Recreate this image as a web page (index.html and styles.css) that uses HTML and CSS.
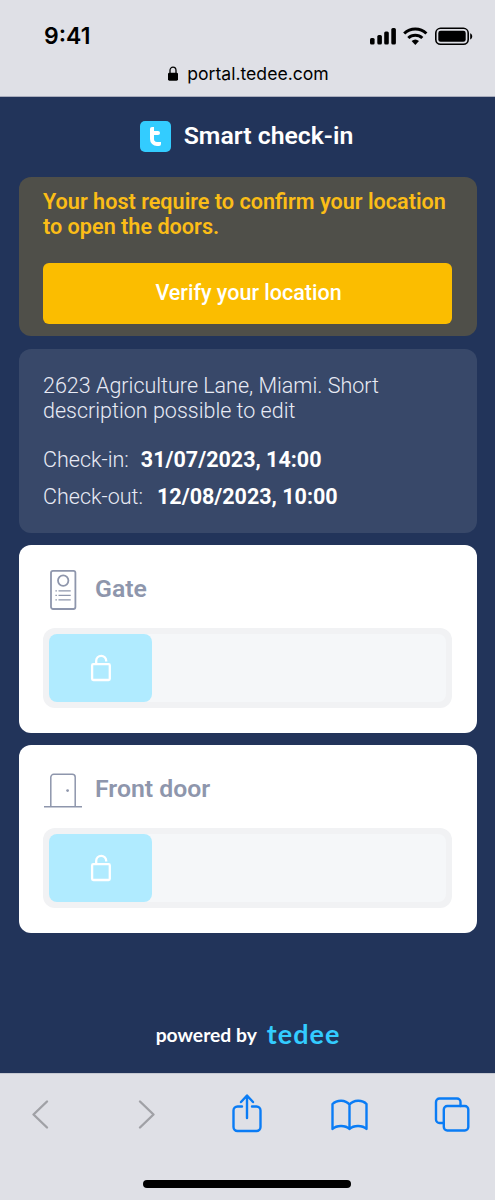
FILE: index.html
```
<!DOCTYPE html>
<html lang="en">
<head>
<meta charset="utf-8">
<title>Smart check-in</title>
<link rel="stylesheet" href="styles.css">
</head>
<body>

<!-- browser top -->
<div class="top">
    <div class="status">
        <span class="time">9:41</span>
        <svg class="status-icons" width="106" height="20" viewBox="0 0 106 20">
            <rect x="1" y="12" width="4.6" height="6.4" rx="1.5"/>
            <rect x="8.3" y="9" width="4.6" height="9.4" rx="1.5"/>
            <rect x="15.2" y="5.5" width="4.6" height="12.9" rx="1.5"/>
            <rect x="22.3" y="2" width="4.6" height="16.4" rx="1.5"/>
            <g fill="none" stroke="#000" stroke-width="3">
                <path d="M35.2 7.5a16 16 0 0 1 22.2 0"/>
                <path d="M39.3 12a10 10 0 0 1 14 0"/>
            </g>
            <path d="M42.6 15.1a5.6 5.6 0 0 1 7.4 0l-3.7 3.8z"/>
            <rect x="66.8" y="2.3" width="32.4" height="16" rx="4.8" fill="none" stroke="#000" stroke-width="1.6"/>
            <rect x="69.3" y="4.8" width="27.4" height="11" rx="2.3"/>
            <path d="M101.2 7.2c2.7 1 2.7 5.2 0 6.2z"/>
        </svg>
    </div>
    <div class="address">
        <svg width="12" height="16" viewBox="0 0 12 16">
            <rect x="1" y="6.7" width="10" height="8" rx="1.4"/>
            <path d="M3 7V4.4a3 3.3 0 0 1 6 0V7" fill="none" stroke="#000" stroke-width="1.3"/>
        </svg>
        <span class="url">portal.tedee.com</span>
    </div>
</div>

<!-- page -->
<div class="main">
    <div class="header">
        <div class="logo"><div class="stem"></div><div class="bar"></div></div>
        <h1>Smart check-in</h1>
    </div>

    <div class="card warning">
        <p>Your host require to confirm your location<br>to open the doors.</p>
        <button class="verify">Verify your location</button>
    </div>

    <div class="card info">
        <p class="address-text">2623 Agriculture Lane, Miami. Short<br>description possible to edit</p>
        <p class="date date-in"><span>Check-in:</span><b>31/07/2023, 14:00</b></p>
        <p class="date date-out"><span>Check-out:</span><b>12/08/2023, 10:00</b></p>
    </div>

    <div class="card lock">
        <div class="lock-name">
            <svg width="40" height="44" viewBox="0 0 40 44" fill="none" stroke="#8e96ac" stroke-width="1.8">
                <rect x="8" y="3.8" width="24.4" height="38.2" rx="2"/>
                <circle cx="20.2" cy="13.6" r="5.2"/>
                <path d="M15.5 23.8h12.2M15.5 28.3h12.2M15.5 32.9h12.2" stroke-width="1.3"/>
                <path d="M12.4 23.8h1.5M12.4 28.3h1.5M12.4 32.9h1.5" stroke-width="1.3"/>
            </svg>
            <h2>Gate</h2>
        </div>
        <div class="slider">
            <div class="handle">
                <svg width="24" height="30" viewBox="0 0 24 30" fill="none" stroke="#fff" stroke-width="2.3">
                    <rect x="3.1" y="11.2" width="17.7" height="15.8" rx="1.2"/>
                    <path d="M7.2 11V7.8a5 5 0 0 1 10 0v.6"/>
                </svg>
            </div>
        </div>
    </div>

    <div class="card lock">
        <div class="lock-name">
            <svg width="40" height="44" viewBox="0 0 40 44" fill="none" stroke="#8e96ac" stroke-width="1.5">
                <path d="M7.8 39.7V10.3a3 3 0 0 1 3-3h18.4a3 3 0 0 1 3 3V39.7M1 39.7h38"/>
                <circle cx="24.6" cy="23.6" r="1.4" fill="#8e96ac" stroke="none"/>
            </svg>
            <h2>Front door</h2>
        </div>
        <div class="slider">
            <div class="handle">
                <svg width="24" height="30" viewBox="0 0 24 30" fill="none" stroke="#fff" stroke-width="2.3">
                    <rect x="3.1" y="11.2" width="17.7" height="15.8" rx="1.2"/>
                    <path d="M7.2 11V7.8a5 5 0 0 1 10 0v.6"/>
                </svg>
            </div>
        </div>
    </div>

    <div class="footer">
        <span class="powered">powered by</span>
        <span class="brand">tedee</span>
    </div>
</div>

<!-- browser toolbar -->
<div class="toolbar">
    <div class="buttons">
        <svg width="40" height="44" viewBox="0 0 40 44" stroke="#a0a1a6"><path d="M27 9.5L13.5 22.5L27 35.5"/></svg>
        <svg width="40" height="44" viewBox="0 0 40 44" stroke="#a0a1a6"><path d="M17 9.5L30.5 22.5L17 35.5"/></svg>
        <svg width="40" height="44" viewBox="0 0 40 44"><path d="M16 14.500h-4.500a4 4 0 0 0-4 4v16.500a4 4 0 0 0 4 4h19a4 4 0 0 0 4-4V18.500a4 4 0 0 0-4-4H26M21 26V4M15 10L21 3.500l6 6.500"/></svg>
        <svg width="40" height="44" viewBox="0 0 40 44"><path d="M20.500 12.500C16.500 7.500 8 7.500 3.500 12v25c4-4 13-4 17 0c4-4 13-4 17 0V12c-4-4.500-13-4.500-17 .5zM20.500 12.500V37"/></svg>
        <svg width="40" height="44" viewBox="0 0 40 44"><rect x="11.8" y="14" width="24.5" height="24.5" rx="3.5"/><path d="M11.500 31H7.500a3.500 3.500 0 0 1-3.500-3.500V10A3.500 3.500 0 0 1 7.500 6.500H25a3.500 3.500 0 0 1 3.500 3.500v4"/></svg>
    </div>
    <div class="home"></div>
</div>

</body>
</html>
```
FILE: styles.css
```
*{box-sizing:border-box;}
body,h1,h2,p{margin:0; padding:0;}
body{width:495px; height:1200px; overflow:hidden; background:#dfe0e6; font-family:Roboto,"Liberation Sans",sans-serif;}
svg{display:block; flex:none;}

/* browser top */
.top{height:97px; border-bottom:1px solid #a9adbd; color:#000;}
.status{height:62px; padding:9px 20px 0 44px; display:flex; justify-content:space-between; align-items:center;}
.time{font:600 23px/28px Inter,sans-serif;}
.address{display:flex; justify-content:center; align-items:center; gap:8px; height:24px; padding-left:1px;}
.url{font:400 17.6px/24px Inter,sans-serif;}

/* page */
.main{height:976px; padding:24px 18px 0 19px; background:#22345a; display:flex; flex-direction:column;}
.header{height:31px; margin-bottom:25px; padding-right:3px; display:flex; justify-content:center; align-items:center; gap:13px;}
.header h1{color:#fff; font-size:24.8px; font-weight:600; line-height:30px; padding-bottom:2px;}
.logo{position:relative; width:31px; height:31px; border-radius:5px; background:#33ccff;}
.stem{position:absolute; left:10px; top:6px; width:11px; height:19px; border:solid #fff; border-width:0 0 4px 4px; border-radius:2px 2px 2px 7px;}
.bar{position:absolute; left:12px; top:10px; width:8px; height:4px; border-radius:2px; background:#fff;}

.card{border-radius:12px; padding:0 25px 0 24px; margin-bottom:12px; flex:none;}
.warning{height:159px; padding-top:12px; margin-bottom:13px; background:#4f4f49;}
.warning p{color:#fbbd17; font-size:21.63px; font-weight:600; line-height:25px; white-space:nowrap;}
.verify{display:block; width:100%; height:61px; margin-top:24px; padding:0 0 2px 2px; border:0; border-radius:6px; background:#fbbd00; color:#fff; font:500 21.5px Roboto,sans-serif;}

.info{height:184px; padding-top:24px; background:#384869; color:#e8ebf5;}
.address-text{font-size:21.5px; font-weight:300; line-height:25px;}
.date{display:flex; font-size:21.5px; font-weight:300; line-height:37px;}
.date-in{margin-top:18px; gap:12px;}
.date-out{gap:14px;}
.date b{color:#fff; font-weight:700;}

.lock{height:188px; padding-top:22px; background:#fff;}
.lock-name{display:flex; align-items:center; gap:12px; height:44px;}
.lock-name h2{color:#8e96ac; font-size:24.8px; font-weight:600; padding-bottom:2px;}
.slider{height:80px; margin-top:17px; padding:6px; border-radius:12px; background:#f1f2f4; display:flex;}
.slider:after{content:""; flex:1; margin-left:-8px; border-radius:0 8px 8px 0; background:#f5f7f9;}
.handle{position:relative; z-index:1; width:103px; height:68px; border-radius:8px; background:#b0ebff; display:flex; justify-content:center; align-items:center;}

.footer{margin-top:71px; display:flex; justify-content:center; align-items:center; gap:10px; height:36px; font-family:Lato,sans-serif;}
.powered{color:#fff; font-size:19.3px; font-weight:700;}
.brand{color:#33ccff; font-size:27px; font-weight:700; line-height:36px; letter-spacing:1px;}

/* browser toolbar */
.toolbar{height:127px; padding-top:18px; border-top:1px solid #c5c8d1;}
.buttons{display:flex; justify-content:space-between; padding:0 23px 0 20px;}
.buttons svg{fill:none; stroke:#0a7cf5; stroke-width:2.4; stroke-linecap:round; stroke-linejoin:round;}
.buttons svg[stroke]{stroke:#a0a1a6;}
.home{width:208px; height:8px; margin:44px 0 0 143px; border-radius:4px; background:#000;}
```
